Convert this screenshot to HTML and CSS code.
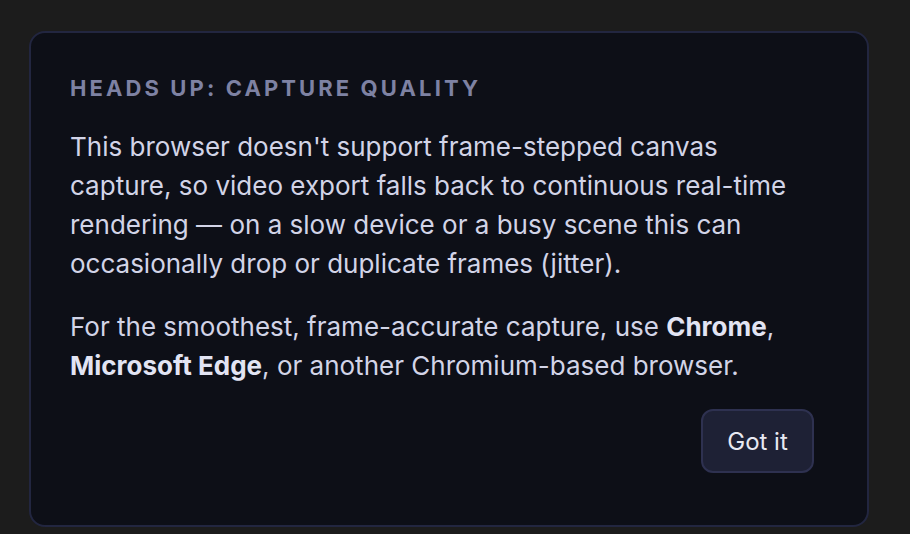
FILE: index.html
```html
<!DOCTYPE html>
<html lang="en">
<head>
    <meta charset="UTF-8">
    <meta name="viewport" content="width=device-width, initial-scale=1.0">
    <title>Capture Quality</title>
    <link rel="stylesheet" href="styles.css">
</head>
<body>
    <!-- Notice shown when frame-stepped capture is unavailable -->
    <div class="notice">
        <h2 class="noticeTitle">Heads up: capture quality</h2>
        <p class="noticeText">This browser doesn't support frame-stepped canvas capture, so video export falls back to continuous real-time rendering — on a slow device or a busy scene this can occasionally drop or duplicate frames (jitter).</p>
        <p class="noticeText">For the smoothest, frame-accurate capture, use <strong>Chrome</strong>, <strong>Microsoft Edge</strong>, or another Chromium-based browser.</p>
        <div class="noticeActions">
            <button class="noticeBtn">Got it</button>
        </div>
    </div>
</body>
</html>
```

FILE: styles.css
```css
/* Dark page behind the dialog */
body {
    margin: 0;
    padding: 31px 0 0 29px;
    background: #1c1c1c;
    font-family: 'Inter', 'Noto Sans', sans-serif;
    overflow: hidden;
}

/* Dialog card */
.notice {
    width: 744px;
    padding: 42px 53px 52px 39px;
    background: #0d0f17;
    border: 2px solid #222640;
    border-radius: 16px;
}

/* Small uppercase heading */
.noticeTitle {
    margin: 0 0 26px;
    font-size: 22px;
    line-height: 26px;
    font-weight: 700;
    letter-spacing: 3.1px;
    text-transform: uppercase;
    color: #7e82a3;
}

/* Body copy */
.noticeText {
    margin: 0 0 24px;
    font-size: 26px;
    line-height: 39px;
    color: #d2d4e7;
}

.noticeText strong {
    color: #e2e4f3;
    font-weight: 700;
}

/* Button row */
.noticeActions {
    display: flex;
    justify-content: flex-end;
}

.noticeBtn {
    width: 113px;
    height: 64px;
    background: #1e2135;
    color: #e8e9f2;
    font-family: inherit;
    font-size: 24px;
    border: 2px solid #2e3150;
    border-radius: 12px;
}
```
